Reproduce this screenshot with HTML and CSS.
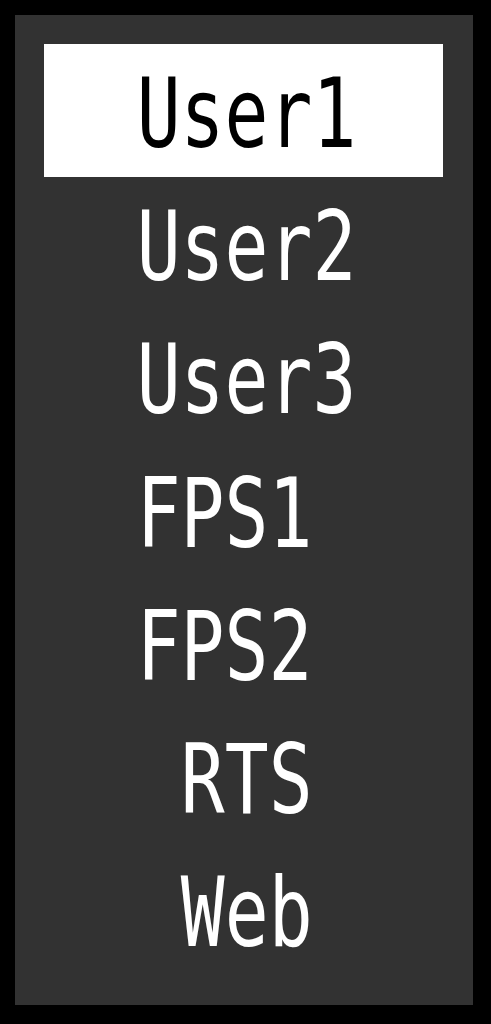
FILE: index.html
```html
<!DOCTYPE html>
<html lang="en">
<head>
  <meta charset="UTF-8">
  <meta name="viewport" content="width=device-width, initial-scale=1.0">
  <title>Color Mode</title>
  <link rel="stylesheet" href="styles.css">
</head>
<body>
  <!-- 模式菜单 -->
  <ul class="menu">
    <li class="item active"><span>User1</span></li>
    <li class="item"><span>User2</span></li>
    <li class="item"><span>User3</span></li>
    <li class="item"><span>FPS1 </span></li>
    <li class="item"><span>FPS2 </span></li>
    <li class="item"><span>RTS</span></li>
    <li class="item"><span>Web</span></li>
  </ul>
</body>
</html>
```

FILE: styles.css
```css
* {
  margin: 0;
  padding: 0;
  box-sizing: border-box;
}
body {
  background: #000;
}
.menu {
  list-style: none;
  width: 458px;
  height: 990px;
  margin: 15px;
  padding: 29px 30px 29px 29px;
  background: #323232;
}
.item {
  height: 133.3px;
  padding: 6px 0 0 6px;
  display: flex;
  align-items: center;
  justify-content: center;
  font-family: "DejaVu Sans Mono", "Liberation Mono", monospace;
  font-size: 96px;
  line-height: 1;
  color: #fff;
}
.item > span {
  display: inline-block;
  white-space: pre;
  transform: scaleX(.76);
}
.item.active {
  background: #fff;
  color: #000;
}
```
